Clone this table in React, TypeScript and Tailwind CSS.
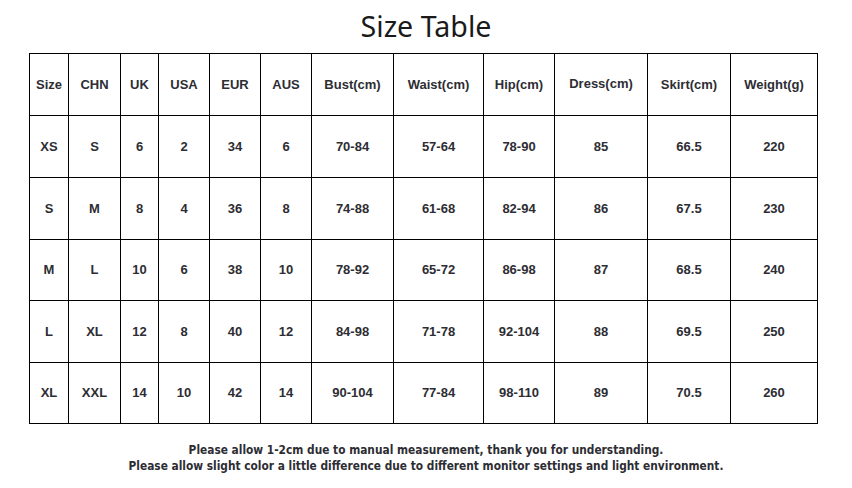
import React from "react";

const cols = ["w-[39px]", "w-[52px]", "w-[38px]", "w-[51px]", "w-[51px]", "w-[51px]", "w-[82px]", "w-[90px]", "w-[71px]", "w-[93px]", "w-[83px]", "w-[87px]"];
const rowH = ["h-[62px]", "h-[62px]", "h-[62px]", "h-[61px]", "h-[62px]", "h-[61px]"];

const rows: string[][] = [
  ["Size", "CHN", "UK", "USA", "EUR", "AUS", "Bust(cm)", "Waist(cm)", "Hip(cm)", "Dress(cm)", "Skirt(cm)", "Weight(g)"],
  ["XS", "S", "6", "2", "34", "6", "70-84", "57-64", "78-90", "85", "66.5", "220"],
  ["S", "M", "8", "4", "36", "8", "74-88", "61-68", "82-94", "86", "67.5", "230"],
  ["M", "L", "10", "6", "38", "10", "78-92", "65-72", "86-98", "87", "68.5", "240"],
  ["L", "XL", "12", "8", "40", "12", "84-98", "71-78", "92-104", "88", "69.5", "250"],
  ["XL", "XXL", "14", "10", "42", "14", "90-104", "77-84", "98-110", "89", "70.5", "260"],
];

export default function App() {
  return (
    <div className="w-[852px] h-[488px] bg-white overflow-hidden">
      <div className="h-[53px] flex items-center justify-center pb-[1px]">
        <h1 className="text-[28.6px] leading-none text-[#1a1a1a] font-normal" style={{ fontFamily: '"Noto Sans", sans-serif' }}>
          Size Table
        </h1>
      </div>
      <div className="ml-[29px] w-[789px] border-l border-t border-black flex flex-col" style={{ fontFamily: '"Liberation Sans", Arial, sans-serif' }}>
        {rows.map((r, ri) => (
          <div key={ri} className={`flex ${rowH[ri]}`}>
            {r.map((c, ci) => (
              <div
                key={ci}
                className={`${cols[ci]} shrink-0 border-r border-b border-black flex items-center justify-center text-[13px] font-bold text-[#2d2d33]`}
              >
                <span className={ri === 0 && ci === 9 ? "-mt-[2px]" : ""}>{c}</span>
              </div>
            ))}
          </div>
        ))}
      </div>
      <div className="mt-[18px] flex flex-col items-center text-[11.8px] leading-[16px] font-bold text-[#2d2d33]" style={{ fontFamily: '"DejaVu Sans Condensed", "DejaVu Sans", sans-serif' }}>
        <p>Please allow 1-2cm due to manual measurement, thank you for understanding.</p>
        <p>Please allow slight color a little difference due to different monitor settings and light environment.</p>
      </div>
    </div>
  );
}
